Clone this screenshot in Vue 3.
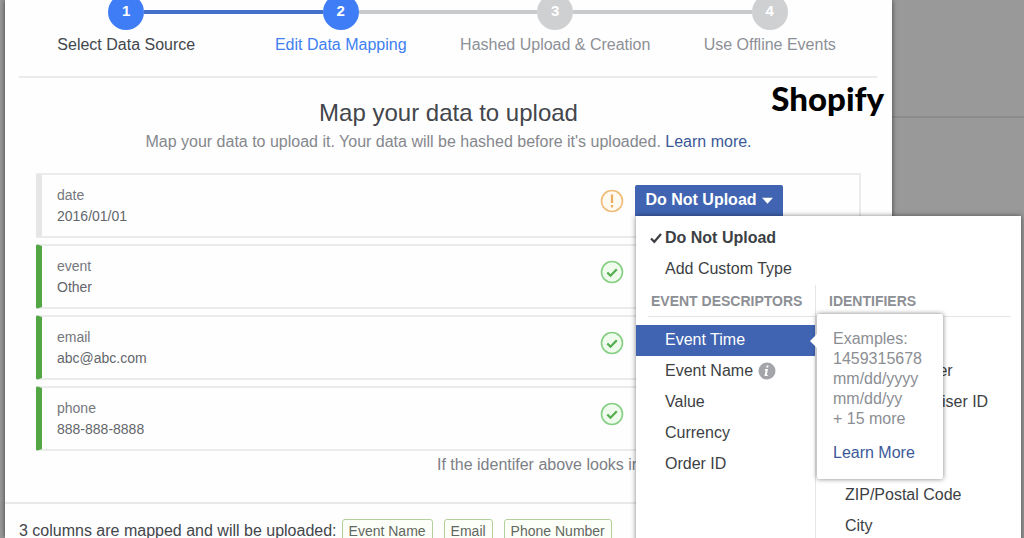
<script setup>
const steps = [
  { label: 'Select Data Source', state: 'done' },
  { label: 'Edit Data Mapping', state: 'current' },
  { label: 'Hashed Upload & Creation', state: 'todo' },
  { label: 'Use Offline Events', state: 'todo' },
]

const rows = [
  { name: 'date', sample: '2016/01/01', mapped: false },
  { name: 'event', sample: 'Other', mapped: true },
  { name: 'email', sample: 'abc@abc.com', mapped: true },
  { name: 'phone', sample: '888-888-8888', mapped: true },
]

const descriptors = ['Event Time', 'Event Name', 'Value', 'Currency', 'Order ID']
const identifiers = [
  'Email',
  'Phone Number',
  'Mobile Advertiser ID',
  'First Name',
  'Last Name',
  'ZIP/Postal Code',
  'City',
]
const formats = ['1459315678', 'mm/dd/yyyy', 'mm/dd/yy', '+ 15 more']
const mappedColumns = ['Event Name', 'Email', 'Phone Number']
</script>

<template>
  <div class="page">
    <main class="dialog">
      <ol class="steps">
        <li v-for="(step, i) in steps" :key="step.label" class="step" :class="step.state">
          <div class="rail"><span class="bubble">{{ i + 1 }}</span></div>
          <span class="step-label">{{ step.label }}</span>
        </li>
      </ol>

      <header class="intro">
        <h1>Map your data to upload</h1>
        <p>
          Map your data to upload it. Your data will be hashed before it's uploaded.
          <a href="#">Learn more.</a>
        </p>
        <strong class="brand">Shopify</strong>
      </header>

      <ul class="rows">
        <li v-for="row in rows" :key="row.name" class="row" :class="{ mapped: row.mapped }">
          <div class="field">
            <span>{{ row.name }}</span>
            <span class="sample">{{ row.sample }}</span>
          </div>
          <svg v-if="row.mapped" class="status" viewBox="0 0 24 24" fill="none">
            <circle cx="12" cy="12" r="10.5" fill="#effbed" stroke="#86cf83" stroke-width="1.6" />
            <path d="M7.3 12.5l3.2 3.2 6.3-6.5" stroke="#55ad50" stroke-width="2.3" />
          </svg>
          <svg v-else class="status" viewBox="0 0 24 24" fill="none">
            <circle cx="12" cy="12" r="10.5" fill="#fffaf1" stroke="#efbb78" stroke-width="1.6" />
            <path d="M12 5.5v8.5M12 16v2.4" stroke="#e9ad5e" stroke-width="2.2" />
          </svg>
          <div class="picker">
            <template v-if="!row.mapped">
              <button type="button" class="picker-button" aria-expanded="true">
                Do Not Upload
                <svg class="caret" viewBox="0 0 12 7"><path d="M0 0.5h12L6 7z" fill="#fff" /></svg>
              </button>
              <div class="menu">
                <button type="button" class="option chosen">
                  <svg class="tick" viewBox="0 0 12 12" fill="none">
                    <path d="M1 6.5l3.3 3.3L11 2" stroke="#3c3f44" stroke-width="2.2" />
                  </svg>
                  Do Not Upload
                </button>
                <button type="button" class="option">Add Custom Type</button>
                <div class="columns">
                  <section class="column">
                    <h2>EVENT DESCRIPTORS</h2>
                    <ul>
                      <li v-for="(item, i) in descriptors" :key="item" class="entry">
                        <button type="button" class="option" :class="{ active: i === 0 }">
                          {{ item }}
                          <svg v-if="item === 'Event Name'" class="info" viewBox="0 0 18 18">
                            <circle cx="9" cy="9" r="8.5" fill="#a3a5aa" />
                            <path
                              d="M10.6 3.4l-.5 2.2H8.2l.5-2.2zM7 7h3l-1.2 5.8h1L9.6 14H6.4l1.2-5.6h-.9z"
                              fill="#fff"
                            />
                          </svg>
                        </button>
                        <aside v-if="i === 0" class="tip">
                          <p>Examples:</p>
                          <p v-for="format in formats" :key="format">{{ format }}</p>
                          <a href="#">Learn More</a>
                        </aside>
                      </li>
                    </ul>
                  </section>
                  <section class="column">
                    <h2>IDENTIFIERS</h2>
                    <ul>
                      <li v-for="item in identifiers" :key="item" class="entry">
                        <button type="button" class="option">{{ item }}</button>
                      </li>
                    </ul>
                  </section>
                </div>
              </div>
            </template>
          </div>
        </li>
      </ul>

      <p class="hint">If the identifer above looks in</p>

      <footer class="summary">
        <span>3 columns are mapped and will be uploaded:</span>
        <div class="tags">
          <span v-for="column in mappedColumns" :key="column" class="tag">{{ column }}</span>
        </div>
      </footer>
    </main>
    <div class="backdrop"></div>
  </div>
</template>

<style>
body {
  background: #999;
}
</style>

<style scoped>
* {
  box-sizing: border-box;
}
ul,
ol,
p,
h1,
h2 {
  margin: 0;
  padding: 0;
  list-style: none;
}
a {
  color: #3b5998;
  text-decoration: none;
}
button {
  font: inherit;
  border: 0;
  cursor: pointer;
}
.page {
  display: flex;
  height: 100vh;
  overflow: hidden;
  padding-left: 5px;
  background: #999;
  font-family: 'Liberation Sans', Arial, sans-serif;
  font-size: 16px;
  color: #43464b;
}
.dialog {
  flex: 1;
  position: relative;
  z-index: 1;
  min-height: 100vh;
  background: #fefefe;
  box-shadow: 0 0 5px rgba(0, 0, 0, 0.6);
}
.backdrop {
  width: 132px;
  height: 118px;
  border-bottom: 2px solid #8b8b8b;
}

.steps {
  display: grid;
  grid-template-columns: repeat(4, 1fr);
  margin: -6px 15px 0 14px;
  padding-bottom: 20px;
  border-bottom: 2px solid #ebebeb;
}
.step {
  text-align: center;
  color: #8d9096;
}
.rail {
  display: flex;
  align-items: center;
  color: #c9cacc;
}
.rail::before,
.rail::after {
  content: '';
  flex: 1;
  height: 4px;
  background: currentColor;
}
.step:first-child .rail::before,
.step:last-child .rail::after {
  visibility: hidden;
}
.bubble {
  width: 36px;
  height: 36px;
  border-radius: 50%;
  background: #cfd0d2;
  color: #fff;
  font-size: 15px;
  font-weight: bold;
  line-height: 34px;
}
.done .bubble,
.current .bubble {
  background: #3f7df6;
}
.done .rail::after,
.current .rail::before {
  background: #4370c8;
}
.step-label {
  display: block;
  margin-top: 4px;
  line-height: 22px;
}
.done .step-label {
  color: #43464b;
}
.current .step-label {
  color: #4080f0;
}

.intro {
  position: relative;
  padding-top: 20px;
  text-align: center;
}
.intro h1 {
  font-size: 24px;
  font-weight: normal;
  line-height: 30px;
}
.intro p {
  line-height: 28px;
  color: #85888d;
}
.brand {
  position: absolute;
  top: 1px;
  right: 8px;
  font-family: Lato, sans-serif;
  font-size: 33px;
  font-weight: 900;
  line-height: 38px;
  color: #000;
}

.rows {
  display: grid;
  gap: 6px;
  margin: 17px 31px 0;
}
.row {
  display: flex;
  align-items: center;
  height: 65px;
  border: 2px solid #ebebeb;
  border-left: 6px solid #e6e6e6;
  border-radius: 2px;
}
.row.mapped {
  border-left-color: #52a744;
}
.field {
  flex: 1;
  display: grid;
  padding-left: 15px;
  font-size: 14px;
  line-height: 21px;
  color: #74777c;
}
.sample {
  color: #63666b;
}
.status {
  width: 24px;
  height: 24px;
  margin: 0 11px 10px 0;
}
.picker {
  position: relative;
  width: 224px;
}
.picker-button {
  display: flex;
  align-items: center;
  justify-content: center;
  gap: 5px;
  width: 148px;
  height: 31px;
  margin-bottom: 11px;
  padding: 0;
  border-radius: 2px 2px 0 0;
  background: #4064b2;
  color: #fff;
  font-weight: bold;
}
.caret {
  width: 11px;
  height: 7px;
}

.menu {
  position: absolute;
  z-index: 2;
  top: 31px;
  left: 1px;
  width: 385px;
  height: 100vh;
  padding-top: 7px;
  background: #fff;
  box-shadow: 0 0 5px rgba(0, 0, 0, 0.5);
}
.option {
  display: flex;
  align-items: center;
  width: 100%;
  height: 31px;
  padding: 0 0 0 29px;
  background: none;
  color: #3c3f44;
  white-space: nowrap;
}
.option.chosen {
  gap: 3px;
  padding-left: 14px;
  font-weight: bold;
}
.tick {
  width: 12px;
  height: 12px;
}
.columns {
  display: flex;
  margin-right: 10px;
}
.column {
  flex: 1;
}
.column:first-child {
  flex: 0 0 180px;
  border-right: 1px solid #e6e6e6;
}
.column h2 {
  height: 32px;
  margin-left: 12px;
  padding-left: 3px;
  border-bottom: 1px solid #e4e4e4;
  font-size: 14px;
  line-height: 32px;
  color: #8c8f94;
  white-space: nowrap;
}
.column + .column h2 {
  margin-left: 0;
  padding-left: 13px;
}
.column ul {
  padding-top: 8px;
}
.entry {
  position: relative;
}
.option.active {
  background: #4064b2;
  color: #fff;
}
.info {
  width: 18px;
  height: 18px;
  margin-left: 5px;
}
.tip {
  position: absolute;
  z-index: 3;
  top: -11px;
  left: 181px;
  width: 126px;
  padding: 15px 0 16px 16px;
  border-radius: 2px;
  background: #fff;
  box-shadow: 0 0 5px rgba(0, 0, 0, 0.5);
  line-height: 20px;
  color: #8b8e93;
}
.tip::before {
  content: '';
  position: absolute;
  top: 20px;
  left: -7px;
  border: 7px solid transparent;
  border-left-width: 0;
  border-right-color: #fff;
}
.tip a {
  display: block;
  margin-top: 14px;
}

.hint {
  margin: 3px 31px 0 432px;
  line-height: 22px;
  color: #7d8086;
}
.summary {
  display: flex;
  align-items: center;
  gap: 5px;
  margin-top: 26px;
  padding: 15px 14px;
  border-top: 2px solid #e8e8e8;
  white-space: nowrap;
}
.tags {
  display: flex;
  gap: 11px;
}
.tag {
  padding: 0 6px;
  border: 1px solid #b3cf9c;
  border-radius: 3px;
  background: #fcfff8;
  font-size: 14px;
  line-height: 22px;
  color: #62675f;
}
</style>
